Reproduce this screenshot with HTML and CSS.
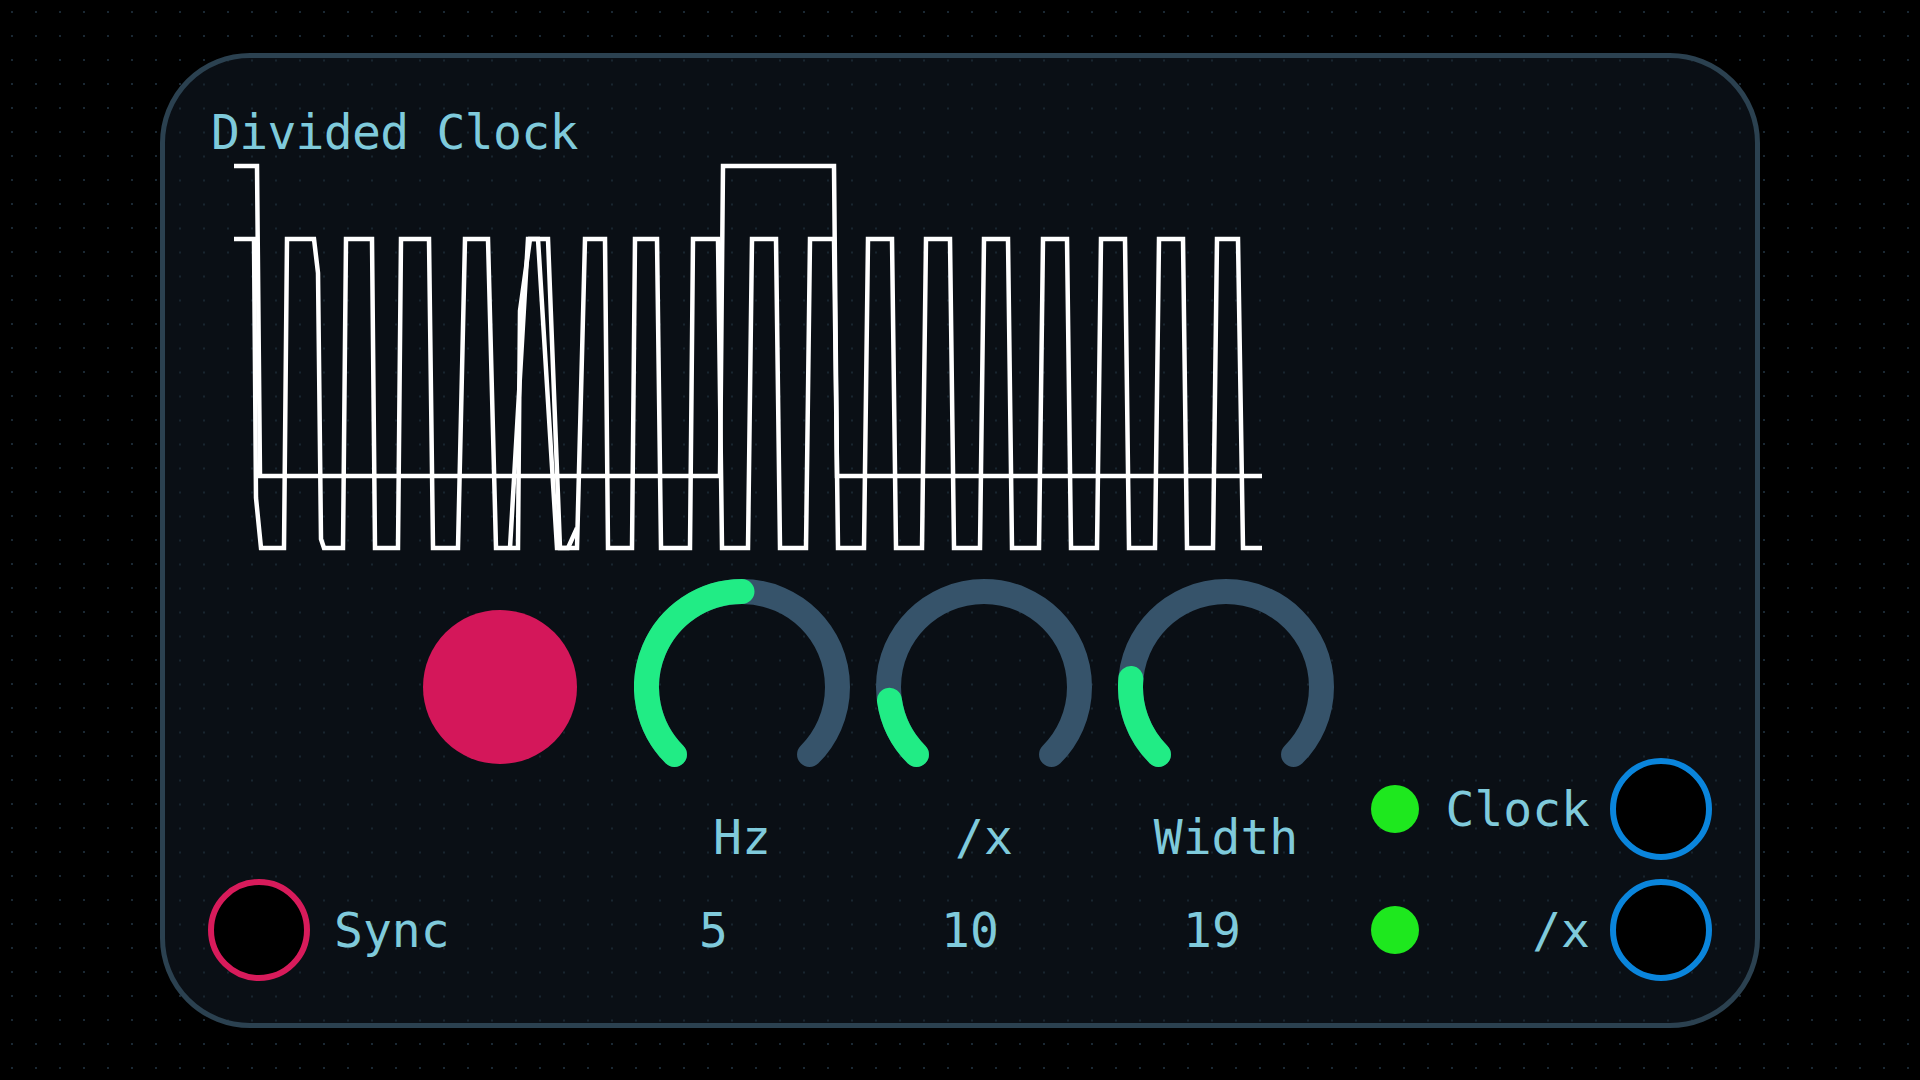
FILE: index.html
```html
<!DOCTYPE html>
<html lang="en">
<head>
<meta charset="utf-8">
<title>Divided Clock</title>
<link rel="stylesheet" href="styles.css">
</head>
<body>
<main class="stage">
  <section class="module">
    <h1 class="title">Divided Clock</h1>
    <svg class="scope" viewBox="213 160 1100 400" width="1100" height="400" aria-hidden="true">
      <path class="trace" d="M234,165 H257 L260,475 H720 L723,165 H834 L837,475 H1262"/>
      <path class="trace" d="M234,238 H254 L256,497 L261,547 H284 L287,238 H314 L318,272 L321,538 L324,547 H343 L346,238 H372 L375,547 H398 L401,238 H429 L433,547 H458 L465,238 H488 L496,547 H518 L520,310 L530,238 H548 L560,547 H577 L585,238 H605 L608,547 H632 L635,238 H657 L661,547 H690 L693,238 H718 L722,547 H748 L752,238 H776 L780,547 H806 L810,238 H834 L838,547 H864 L868,238 H892 L896,547 H922 L926,238 H950 L954,547 H980 L984,238 H1008 L1012,547 H1039 L1043,238 H1067 L1071,547 H1097 L1101,238 H1125 L1129,547 H1155 L1159,238 H1183 L1187,547 H1213 L1217,238 H1238 L1243,547 H1262"/>
      <path class="trace" d="M510,547 L528,238 H538 L557,547 H568 L577,527"/>
    </svg>
    <div class="controls">
      <div class="panel">
        <div class="btn-cell"><div class="button"></div></div>
        <div class="knob k1">
          <svg viewBox="0 0 216 216" width="216" height="216">
            <path class="arc-bg" d="M40.47,175.53 A95.5,95.5 0 1 1 175.53,175.53"/>
            <path class="arc-fg" d="M40.47,175.53 A95.5,95.5 0 0 1 108,12.5"/>
          </svg>
        </div>
        <div class="knob k2">
          <svg viewBox="0 0 216 216" width="216" height="216">
            <path class="arc-bg" d="M40.47,175.53 A95.5,95.5 0 1 1 175.53,175.53"/>
            <path class="arc-fg" d="M40.47,175.53 A95.5,95.5 0 0 1 13.43,121.29"/>
          </svg>
        </div>
        <div class="knob k3">
          <svg viewBox="0 0 216 216" width="216" height="216">
            <path class="arc-bg" d="M40.47,175.53 A95.5,95.5 0 1 1 175.53,175.53"/>
            <path class="arc-fg" d="M40.47,175.53 A95.5,95.5 0 0 1 12.88,99.51"/>
          </svg>
        </div>
        <div class="label l1">Hz</div>
        <div class="label l2">/x</div>
        <div class="label l3">Width</div>
        <div class="sync">
          <span class="jack jack-red"></span>
          <span class="text">Sync</span>
        </div>
        <div class="value v1">5</div>
        <div class="value v2">10</div>
        <div class="value v3">19</div>
      </div>
      <div class="outputs">
        <span class="led"></span>
        <span class="port-label">Clock</span>
        <span class="jack jack-blue"></span>
        <span class="led"></span>
        <span class="port-label">/x</span>
        <span class="jack jack-blue"></span>
      </div>
    </div>
  </section>
</main>
</body>
</html>
```

FILE: styles.css
```css
* { box-sizing: border-box; }

html, body {
  margin: 0;
  padding: 0;
}

body {
  width: 1920px;
  height: 1080px;
  background-color: #000;
  background-image: radial-gradient(circle, #1a2833 0.9px, transparent 1.5px);
  background-size: 24px 24px;
  background-attachment: fixed;
  font-family: "DejaVu Sans Mono", "Liberation Mono", monospace;
  color: #7fcadb;
}

.stage {
  width: 1920px;
  height: 1080px;
  display: flex;
  align-items: center;
  justify-content: center;
}

.module {
  width: 1600px;
  height: 975px;
  border: 5px solid #2b4150;
  border-radius: 90px;
  background-color: #0a0f15;
  background-image: radial-gradient(circle, #18252f 0.9px, transparent 1.5px);
  background-size: 24px 24px;
  background-attachment: fixed;
  padding: 50px 0 42px 0;
  display: flex;
  flex-direction: column;
}

.title {
  margin: 0 0 0 46px;
  font-size: 48px;
  line-height: 48px;
  font-weight: normal;
  letter-spacing: -0.7px;
  color: #7fcadb;
}

.scope {
  display: block;
  margin: 5px 0 0 48px;
}

.trace {
  fill: none;
  stroke: #ffffff;
  stroke-width: 4.5;
  stroke-linejoin: miter;
  stroke-linecap: butt;
}

.controls {
  margin-top: 18px;
  display: flex;
  align-items: flex-end;
}

.panel {
  display: grid;
  grid-template-columns: 214px repeat(4, 242px);
  grid-template-rows: 216px 48px 102px;
  row-gap: 18px;
}

.btn-cell {
  grid-column: 2;
  grid-row: 1;
  display: flex;
  align-items: center;
  justify-content: center;
}

.button {
  width: 154px;
  height: 154px;
  border-radius: 50%;
  background: #d4175a;
}

.knob {
  grid-row: 1;
  display: flex;
  justify-content: center;
  align-items: center;
}
.knob svg { display: block; }
.k1 { grid-column: 3; }
.k2 { grid-column: 4; }
.k3 { grid-column: 5; }

.arc-bg {
  fill: none;
  stroke: #36536a;
  stroke-width: 25;
  stroke-linecap: round;
}
.arc-fg {
  fill: none;
  stroke: #21ec85;
  stroke-width: 25;
  stroke-linecap: round;
}

.label {
  grid-row: 2;
  text-align: center;
  font-size: 48px;
  line-height: 48px;
}
.l1 { grid-column: 3; }
.l2 { grid-column: 4; }
.l3 { grid-column: 5; }

.sync {
  grid-row: 3;
  grid-column: 1 / span 2;
  display: flex;
  align-items: center;
  gap: 24px;
  padding-left: 43px;
}

.text, .port-label, .value {
  font-size: 48px;
  line-height: 48px;
}

.value {
  grid-row: 3;
  align-self: center;
  justify-self: start;
  margin-left: 78px;
}
.v1 { grid-column: 3; }
.v2 { grid-column: 4; }
.v3 { grid-column: 5; }

.jack {
  width: 102px;
  height: 102px;
  border-radius: 50%;
  background: #000;
  border: 6px solid;
  flex: none;
}
.jack-red { border-color: #d81b5b; }
.jack-blue { border-color: #0a85dc; }

.outputs {
  margin-left: 24px;
  display: grid;
  grid-template-columns: 48px 145px 102px;
  grid-template-rows: 102px 102px;
  column-gap: 23px;
  row-gap: 19px;
  align-items: center;
}

.led {
  width: 48px;
  height: 48px;
  border-radius: 50%;
  background: #1ee81e;
}

.port-label {
  text-align: right;
  margin-right: -3px;
}
```
